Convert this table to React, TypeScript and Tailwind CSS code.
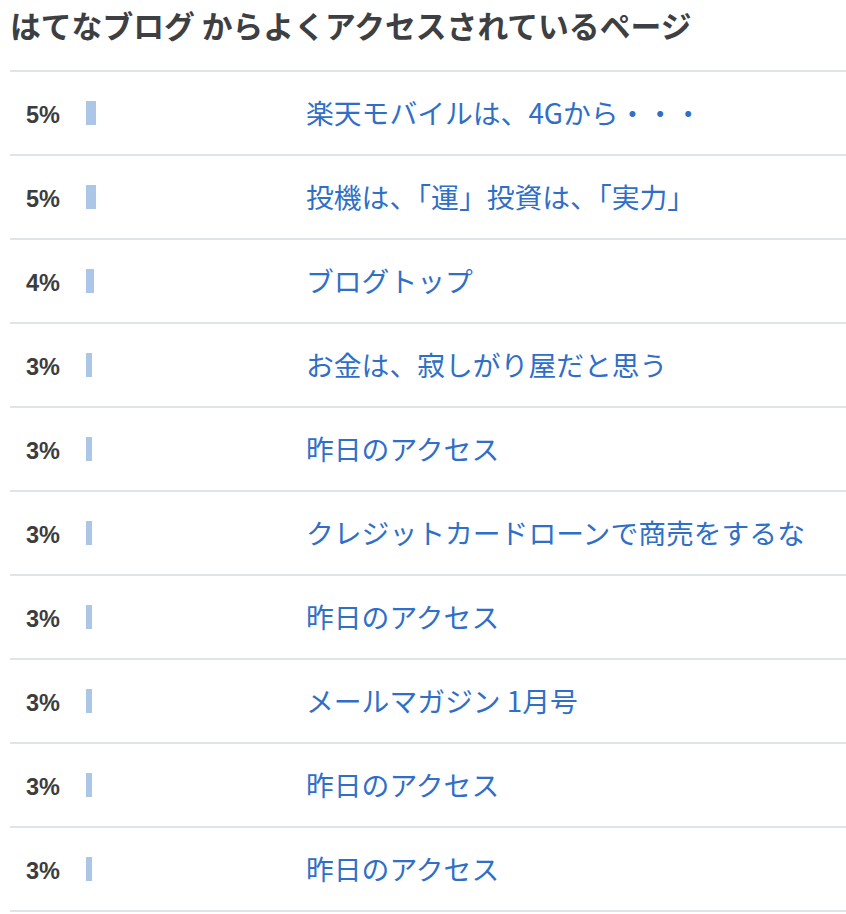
const pages = [
  { pct: 5, title: '楽天モバイルは、4Gから・・・' },
  { pct: 5, title: '投機は、「運」投資は、「実力」' },
  { pct: 4, title: 'ブログトップ' },
  { pct: 3, title: 'お金は、寂しがり屋だと思う' },
  { pct: 3, title: '昨日のアクセス' },
  { pct: 3, title: 'クレジットカードローンで商売をするな' },
  { pct: 3, title: '昨日のアクセス' },
  { pct: 3, title: 'メールマガジン 1月号' },
  { pct: 3, title: '昨日のアクセス' },
  { pct: 3, title: '昨日のアクセス' },
]

export default function App() {
  return (
    <div className="min-h-[914px] bg-white pl-[10px] font-['Noto_Sans_CJK_JP','Noto_Sans',sans-serif]">
      <h2 className="pt-[5px] pb-[25px] text-[30.8px] leading-[40px] font-bold text-[#3d3f43]">
        はてなブログ からよくアクセスされているページ
      </h2>
      <ul>
        {pages.map((p, i) => (
          <li key={i} className="border-t-2 border-[#dfe4e8] h-[84px] flex items-center">
            <span className="w-[76px] pl-[16px] pt-[6px] text-[23.5px] font-bold text-[#3d3d3d] font-['Liberation_Sans','Noto_Sans',sans-serif]">
              {p.pct}%
            </span>
            <div className="w-[220px] flex">
              <span className="h-[24px] bg-[#abc6e6]" style={{ width: p.pct * 2 }} />
            </div>
            <a href="#" className="text-[27.8px] leading-none text-[#2f6fc8] whitespace-nowrap">
              {p.title}
            </a>
          </li>
        ))}
        <li className="border-t-2 border-[#dfe4e8]" />
      </ul>
    </div>
  )
}
